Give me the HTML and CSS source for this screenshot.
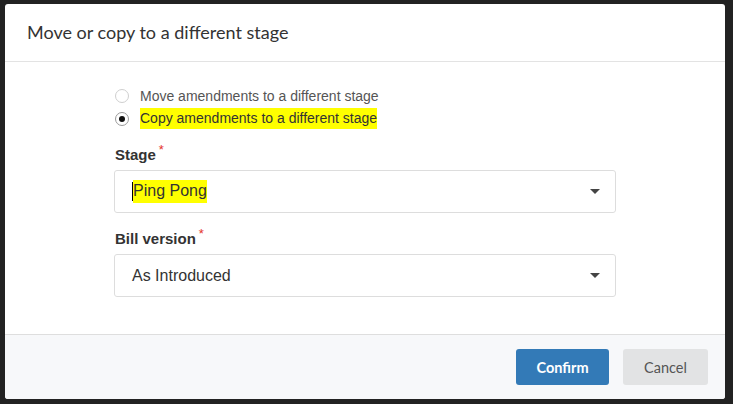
FILE: index.html
```html
<!DOCTYPE html>
<html>
<head>
<meta charset="utf-8">
<link rel="stylesheet" href="styles.css">
</head>
<body>
<div class="backdrop">
  <div class="modal">
    <div class="modal-header">
      <h1 class="title">Move or copy to a different stage</h1>
    </div>
    <div class="modal-body">
      <div class="radios">
        <label class="radio-row">
          <span class="radio"></span>
          <span class="radio-text muted">Move amendments to a different stage</span>
        </label>
        <label class="radio-row">
          <span class="radio checked"><span class="dot"></span></span>
          <span class="radio-text hl">Copy amendments to a different stage</span>
        </label>
      </div>
      <div class="field">
        <div class="field-label">Stage<span class="req">*</span></div>
        <div class="select">
          <span class="select-value"><span class="caret"></span><span class="hl">Ping Pong</span></span>
          <span class="arrow"></span>
        </div>
      </div>
      <div class="field">
        <div class="field-label">Bill version<span class="req">*</span></div>
        <div class="select">
          <span class="select-value">As Introduced</span>
          <span class="arrow"></span>
        </div>
      </div>
    </div>
    <div class="modal-footer">
      <button class="btn btn-primary">Confirm</button>
      <button class="btn btn-default">Cancel</button>
    </div>
  </div>
</div>
</body>
</html>
```
FILE: styles.css
```css
html, body {
  margin: 0;
  padding: 0;
  width: 733px;
  height: 404px;
  overflow: hidden;
  background: #222222;
}
.backdrop {
  padding: 4px 8px 0 5px;
}
.modal {
  width: 720px;
  height: 395px;
  background: #ffffff;
  border-radius: 3px;
  display: flex;
  flex-direction: column;
  overflow: hidden;
}
.modal-header {
  height: 58px;
  border-bottom: 1px solid #e3e3e3;
  display: flex;
  align-items: center;
  padding: 0 22px 2px;
  box-sizing: border-box;
}
.title {
  margin: 0;
  font-family: Lato, "Liberation Sans", sans-serif;
  font-weight: 400;
  font-size: 18px;
  color: #333333;
}
.modal-body {
  flex: 1;
  padding: 25px 109px 0 109px;
  font-family: "Liberation Sans", Arial, sans-serif;
}
.radios {
  display: flex;
  flex-direction: column;
  gap: 6px;
  padding-left: 1px;
}
.radio-row {
  display: flex;
  align-items: center;
  height: 17px;
}
.radio {
  border: 1px solid #cfcfcf;
  border-radius: 50%;
  box-sizing: border-box;
  width: 14px;
  height: 14px;
  margin-right: 11px;
  display: flex;
  align-items: center;
  justify-content: center;
  background: #fff;
}
.radio.checked {
  border-color: #9a9a9a;
}
.dot {
  width: 6px;
  height: 6px;
  border-radius: 50%;
  background: #111;
}
.radio-text {
  font-size: 14px;
  color: #333;
}
.radio-text.muted {
  color: #555;
}
.hl {
  background: #ffff00;
  padding: 2px 0 3px;
}
.field {
  margin-top: 19px;
}
.field + .field {
  margin-top: 17px;
}
.field-label {
  font-size: 15px;
  font-weight: 700;
  color: #333;
  margin-bottom: 7px;
  margin-left: 1px;
}
.req {
  color: #e4322b;
  font-weight: 400;
  font-size: 13px;
  position: relative;
  top: -6px;
  margin-left: 3px;
}
.select {
  height: 43px;
  border: 1px solid #dddddd;
  border-radius: 3px;
  box-sizing: border-box;
  display: flex;
  align-items: center;
  justify-content: space-between;
  padding: 0 15px 0 17px;
}
.select-value {
  font-size: 16px;
  color: #333;
  display: flex;
  align-items: center;
}
.caret {
  width: 1px;
  height: 19px;
  background: #000;
}
.arrow {
  width: 0;
  height: 0;
  border-left: 5px solid transparent;
  border-right: 5px solid transparent;
  border-top: 5px solid #444;
}
.modal-footer {
  height: 65px;
  border-top: 1px solid #dedede;
  background: #f7f8fa;
  box-sizing: border-box;
  display: flex;
  justify-content: flex-end;
  align-items: flex-start;
  padding: 14px 17px 0 0;
  gap: 14px;
}
.btn {
  height: 36px;
  border: none;
  border-radius: 3px;
  font-family: Lato, "Liberation Sans", sans-serif;
  font-size: 14.5px;
  cursor: pointer;
}
.btn-primary {
  width: 93px;
  background: #337ab7;
  color: #fff;
  font-weight: 700;
}
.btn-default {
  width: 85px;
  background: #e2e3e4;
  color: #555;
  font-weight: 400;
}
```
